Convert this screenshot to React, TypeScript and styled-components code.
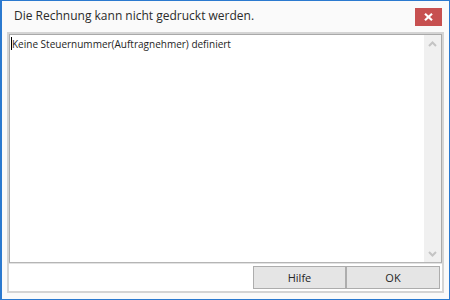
import React from "react";
import styled, { createGlobalStyle } from "styled-components";

const GlobalStyle = createGlobalStyle`
  html, body {
    margin: 0;
    padding: 0;
    width: 450px;
    height: 300px;
    overflow: hidden;
    background: #ffffff;
  }
`;

export default function App() {
  return (
    <>
      <GlobalStyle />
      <Window>
        <TitleBar>
          <Title>Die Rechnung kann nicht gedruckt werden.</Title>
          <CloseButton aria-label="Schließen">
            <svg width="9" height="8" viewBox="0 0 9 8">
              <path d="M1 0.8 L8 7.2 M8 0.8 L1 7.2" stroke="#ffffff" strokeWidth="2.2" />
            </svg>
          </CloseButton>
        </TitleBar>
        <Panel>
          <TextBox>
            <TextContent>
              <Caret />
              Keine Steuernummer(Auftragnehmer) definiert
            </TextContent>
            <ScrollBar>
              <ScrollArrow>
                <svg width="9" height="6" viewBox="0 0 9 6">
                  <path d="M1 5 L4.5 1.5 L8 5" stroke="#c4c4c4" strokeWidth="2" fill="none" />
                </svg>
              </ScrollArrow>
              <ScrollArrow>
                <svg width="9" height="6" viewBox="0 0 9 6">
                  <path d="M1 1 L4.5 4.5 L8 1" stroke="#c4c4c4" strokeWidth="2" fill="none" />
                </svg>
              </ScrollArrow>
            </ScrollBar>
          </TextBox>
          <ButtonRow>
            <DialogButton $width={93}>Hilfe</DialogButton>
            <DialogButton $width={94}>OK</DialogButton>
          </ButtonRow>
        </Panel>
      </Window>
    </>
  );
}

const Window = styled.div`
  width: 450px;
  height: 300px;
  box-sizing: border-box;
  border: 1px solid #2b79cf;
  border-left-width: 2px;
  background: #fafafa;
  display: flex;
  flex-direction: column;
  font-family: "Open Sans", "Noto Sans", sans-serif;
`;

const TitleBar = styled.div`
  height: 31px;
  display: flex;
  justify-content: space-between;
  align-items: flex-start;
  padding: 0 7px 0 12px;
`;

const Title = styled.div`
  font-size: 12px;
  color: #2b2b2b;
  margin-top: 7px;
  line-height: 16px;
`;

const CloseButton = styled.div`
  width: 27px;
  height: 18px;
  margin-top: 7px;
  background: #c75050;
  display: flex;
  align-items: center;
  justify-content: center;
`;

const Panel = styled.div`
  flex: 1;
  margin: 0 5px 6px 5px;
  border: 2px solid #d4d4d4;
  background: #ffffff;
  display: flex;
  flex-direction: column;
`;

const TextBox = styled.div`
  flex: 1;
  display: flex;
  border: 1px solid #a9a9a9;
  border-bottom-color: #b5b5b5;
  box-shadow: 0 1px 0 #e2e2e2;
`;

const TextContent = styled.div`
  flex: 1;
  padding: 2px 1px;
  font-size: 10px;
  line-height: 14px;
  color: #1e1e1e;
  display: flex;
  align-items: flex-start;
`;

const Caret = styled.span`
  width: 1px;
  height: 13px;
  background: #000000;
`;

const ScrollBar = styled.div`
  width: 17px;
  background: #f0f0f0;
  display: flex;
  flex-direction: column;
  justify-content: space-between;
`;

const ScrollArrow = styled.div`
  height: 17px;
  display: flex;
  align-items: center;
  justify-content: center;
`;

const ButtonRow = styled.div`
  height: 28px;
  box-sizing: border-box;
  padding: 3px 2px 2px 0;
  display: flex;
  justify-content: flex-end;
`;

const DialogButton = styled.div<{ $width: number }>`
  width: ${(p) => p.$width}px;
  box-sizing: border-box;
  border: 1px solid #adadad;
  background: #e5e5e5;
  color: #262626;
  font-size: 11px;
  display: flex;
  align-items: center;
  justify-content: center;
`;
